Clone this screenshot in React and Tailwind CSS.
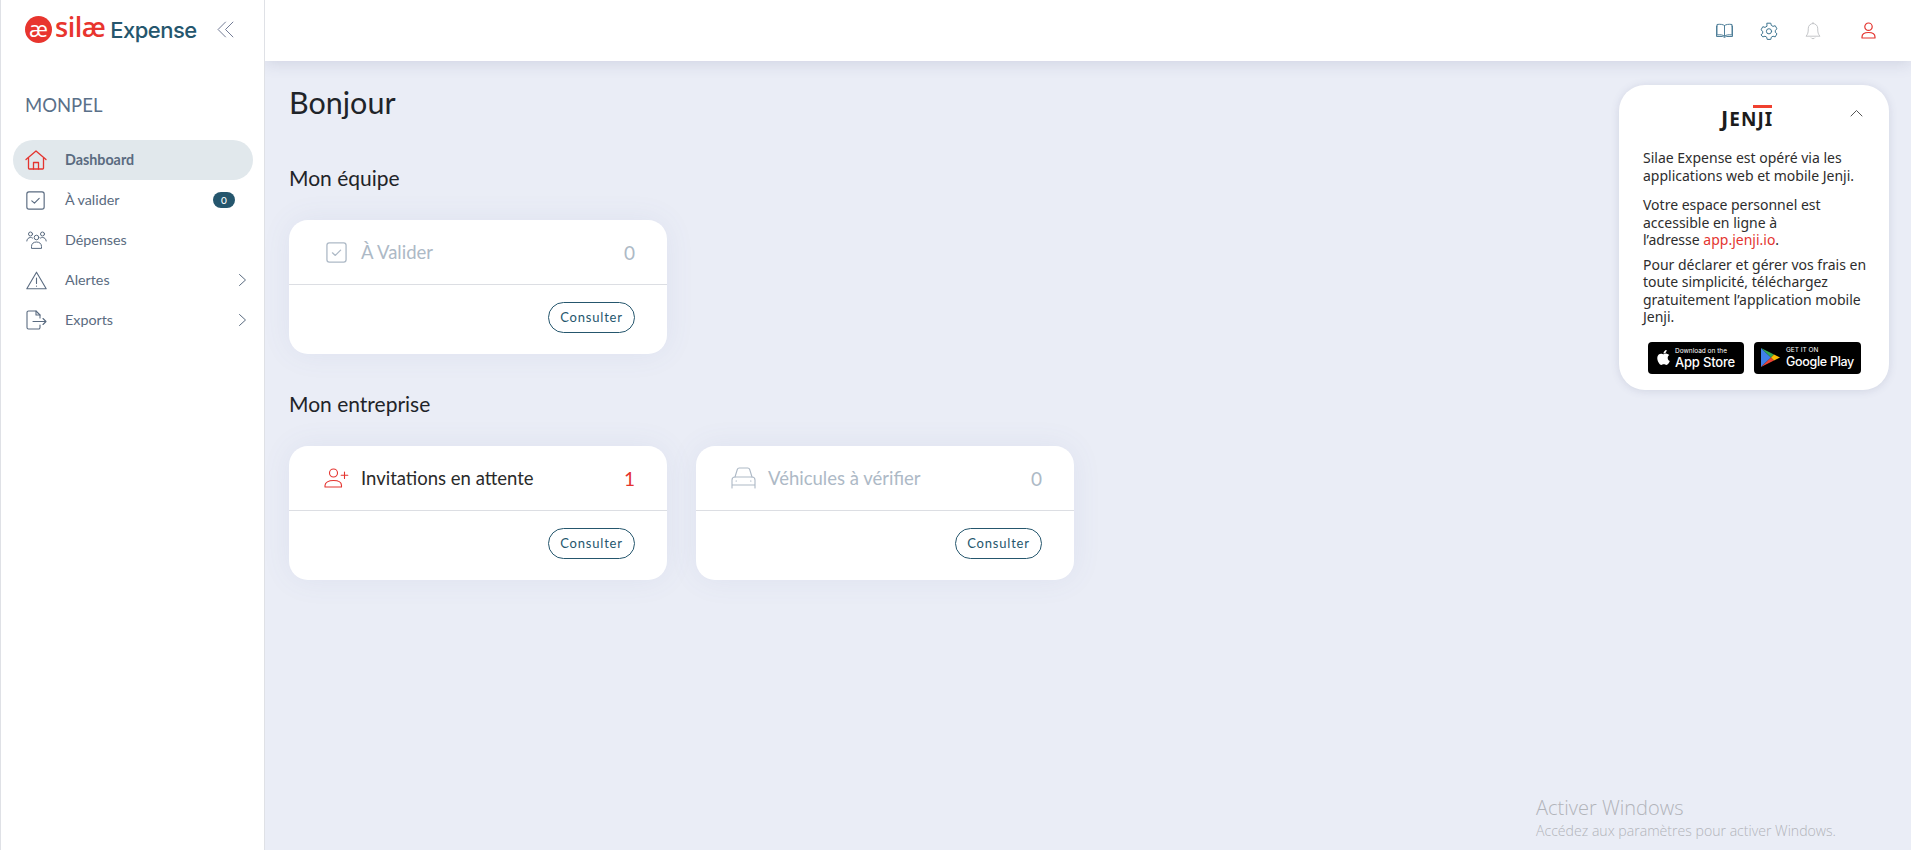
import React from "react";
import { FaApple } from "react-icons/fa";

const Ic = ({ children, className = "", w = 24, h = 24, vb = "0 0 24 24", sw = 1.3 }) => (
  <svg width={w} height={h} viewBox={vb} fill="none" stroke="currentColor" strokeWidth={sw} strokeLinecap="round" strokeLinejoin="round" className={className}>
    {children}
  </svg>
);

const Home = () => (
  <Ic className="text-[#e4342f]" w={22} h={22} vb="0 0 22 22">
    <path d="M1 10.500 11 2l10 8.500" />
    <path d="M3.500 9v10.200a.8.8 0 0 0 .8.8h13.400a.8.8 0 0 0 .8-.8V9" />
    <path d="M8.500 20v-6.500h5V20" />
  </Ic>
);
const Check = ({ cls, s = 18 }) => (
  <Ic className={cls} w={s} h={s} vb="0 0 18 18" sw={1.1}>
    <rect x="0.8" y="0.8" width="16.400" height="16.400" rx="2" />
    <path d="m5.500 9.300 2.500 2.200 4.500-4.500" />
  </Ic>
);
const Team = () => (
  <Ic className="text-[#5a6b80]" w={21} h={18} vb="0 0 21 18" sw={1}>
    <circle cx="10.500" cy="6.500" r="2.300" /><circle cx="4.500" cy="3" r="2" /><circle cx="16.500" cy="3" r="2" />
    <path d="M5.500 17v-1.500c0-3 2.200-4.500 5-4.500s5 1.500 5 4.500V17z" />
    <path d="M.8 10c0-1.800 1.600-3.500 3.700-3.500 1 0 1.700.2 2.300.8M20.200 10c0-1.800-1.600-3.500-3.700-3.500-1 0-1.700.2-2.300.8" />
  </Ic>
);
const Alert = () => (
  <Ic className="text-[#5a6b80]" w={21} h={19} vb="0 0 21 19" sw={1.1}>
    <path d="M10.500 1.200 20.200 17.800H.8z" />
    <path d="M10.500 7v5.500M10.500 15v.2" />
  </Ic>
);
const Export = () => (
  <Ic className="text-[#5a6b80]" w={21} h={20} vb="0 0 21 20" sw={1.1}>
    <path d="M14 8V5l-4-4H2.500A1.500 1.500 0 0 0 1 2.500v15A1.500 1.500 0 0 0 2.500 19H12.500a1.500 1.500 0 0 0 1.500-1.500V15" />
    <path d="M10 1v4h4M7 11.500h13M17 8.500l3 3-3 3" />
  </Ic>
);
const Chevron = () => (
  <Ic className="text-[#5a6b80]" w={9} h={14} vb="0 0 9 14" sw={1}>
    <path d="m1.500 1.500 6 5.500-6 5.500" />
  </Ic>
);

const NavItem = ({ icon, label, active, badge, chevron }) => (
  <div className={`h-10 ml-[12px] w-[240px] rounded-[20px] flex items-center pl-[12px] pr-[6px] ${active ? "bg-[#e1e8ec]" : ""}`}>
    <span className="w-[22px] flex justify-center shrink-0">{icon}</span>
    <span className={`ml-[18px] flex-1 text-[14.300px] text-[#5a6b80] ${active ? "font-bold" : ""}`}>{label}</span>
    {badge !== undefined && (
      <span className="mr-[12px] w-[22px] h-[16px] rounded-full bg-[#25566d] text-white text-[10px] font-medium flex items-center justify-center">{badge}</span>
    )}
    {chevron && <Chevron />}
  </div>
);

const Card = ({ icon, label, value, tone }) => (
  <div className="w-[378px] h-[134px] bg-white rounded-[19px] shadow-[0_0_30px_rgba(90,100,160,0.08)] flex flex-col">
    <div className="h-[65px] border-b border-[#dcdee3] flex items-center pl-[35px] pr-[32px]">
      <span className="w-[25px] flex justify-center shrink-0">{icon}</span>
      <span className={`ml-[12px] flex-1 text-[18.500px] leading-none ${tone === "on" ? "text-[#2a2a2a]" : "text-[#adb9c6]"}`}>{label}</span>
      <span className={`text-[19px] leading-none ${tone === "on" ? "text-[#e4342f]" : "text-[#adb9c6]"}`}>{value}</span>
    </div>
    <div className="flex-1 flex items-center justify-end pr-[32px] pb-[4px]">
      <button className="w-[87px] h-[31px] rounded-full border border-[#25566d] text-[#25566d] text-[13px] tracking-[0.8px] flex items-center justify-center">Consulter</button>
    </div>
  </div>
);

export default function App() {
  return (
    <div className="w-full h-[850px] flex overflow-hidden bg-[#eaedf6] font-['Lato',sans-serif] relative">
      <aside className="w-[265px] shrink-0 h-full bg-white border-l border-r border-[#dfe1e6] flex flex-col relative z-20">
        <div className="h-[61px] flex items-center pl-[24px] pb-[2px]">
          <span className="w-[27px] h-[27px] rounded-full bg-[#e8352e] text-white flex items-center justify-center text-[22px] leading-none font-['Open_Sans',sans-serif] pb-[3px]">æ</span>
          <span className="ml-[3px] text-[#e8352e] text-[27px] leading-none font-semibold font-['Open_Sans',sans-serif] tracking-[-0.5px] pb-[6px]">silæ</span>
          <span className="ml-[5px] text-[#25566d] text-[22px] leading-none font-medium font-['Inter',sans-serif] tracking-[-0.5px]">Expense</span>
          <Ic className="text-[#6b7590] ml-[20px]" w={17} h={17} vb="0 0 16 16" sw={0.9}>
            <path d="M8 1 1 8l7 7M15 1 8 8l7 7" />
          </Ic>
        </div>
        <div className="mt-[32px] pl-[24px] text-[18.500px] leading-[24px] text-[#5a7089]">MONPEL</div>
        <nav className="mt-[23px] flex flex-col">
          <NavItem icon={<Home />} label="Dashboard" active />
          <NavItem icon={<Check cls="text-[#5a6b80] -ml-[2px]" s={19} />} label="À valider" badge={0} />
          <NavItem icon={<Team />} label="Dépenses" />
          <NavItem icon={<Alert />} label="Alertes" chevron />
          <NavItem icon={<Export />} label="Exports" chevron />
        </nav>
      </aside>

      <div className="flex-1 flex flex-col min-w-0">
        <header className="h-[61px] shrink-0 bg-white shadow-[0_3px_14px_rgba(80,90,130,0.16)] flex items-center justify-end relative z-10 pr-[35px]">
          <div className="flex items-center">
            <Ic className="text-[#4f7f99]" w={17} h={15} vb="0 0 17 15" sw={1}>
              <path d="M8.500 2.500C7 1.300 4 1 1 1.500v10.500c3-.5 6-.2 7.500 1.200C10 11.800 13 11.500 16 12V1.500C13 1 10 1.300 8.500 2.500zM8.500 2.500v10.700" />
              <path d="M1 3H.5v10.500h6c.8 0 1.500.8 2 1 .5-.2 1.200-1 2-1h6V3H16" />
            </Ic>
            <Ic className="text-[#3f7691] ml-[27px]" w={18} h={18} vb="0 0 18 18" sw={1}>
              <path d="M7.200 1.200h3.600l.5 2.200 1.700 1 2.200-.7 1.800 3.100-1.700 1.500v2l1.700 1.500-1.800 3.100-2.200-.7-1.700 1-.5 2.200H7.200l-.5-2.200-1.700-1-2.200.7L1 12.800l1.700-1.500v-2L1 7.800l1.800-3.100 2.200.7 1.700-1z" />
              <circle cx="9" cy="9.300" r="2.600" />
            </Ic>
            <Ic className="text-[#c4c6c9] ml-[27px]" w={16} h={18} vb="0 0 16 18" sw={1}>
              <path d="M8 1.500a4.700 4.700 0 0 0-4.700 4.700c0 4.500-.5 6-2.300 8h14c-1.800-2-2.300-3.500-2.300-8A4.700 4.700 0 0 0 8 1.500zM8 .5v1M6.200 16c.4 1 3.200 1 3.600 0" />
            </Ic>
            <Ic className="text-[#e4342f] ml-[40px]" w={15} h={17} vb="0 0 15 17" sw={1.200}>
              <circle cx="7.500" cy="4.700" r="3.700" />
              <path d="M1 16v-1c0-3 2.500-4.500 6.500-4.500s6.500 1.500 6.500 4.500v1z" />
            </Ic>
          </div>
        </header>

        <main className="flex-1 pl-[24px]">
          <h1 className="mt-[21px] mb-[1px] text-[30.500px] leading-[40px] text-[#1f2429]">Bonjour</h1>
          <h2 className="mt-[41px] text-[21px] leading-[30px] text-[#1f2429]">Mon équipe</h2>
          <div className="mt-[27px]">
            <Card icon={<Check cls="text-[#adb9c6]" s={21} />} label="À Valider" value="0" />
          </div>
          <h2 className="mt-[35px] text-[21px] leading-[30px] text-[#1f2429]">Mon entreprise</h2>
          <div className="mt-[27px] flex gap-[29px]">
            <Card
              tone="on"
              icon={
                <Ic className="text-[#e4342f]" w={25} h={20} vb="0 0 25 20" sw={1.100}>
                  <circle cx="9.500" cy="5" r="4" />
                  <path d="M1 19v-1.500c0-3 3.500-5 8.500-5s8 2 8 5V19z" />
                  <path d="M20.500 4v6.500M17.200 7.200h6.600" />
                </Ic>
              }
              label="Invitations en attente"
              value="1"
            />
            <Card
              icon={
                <Ic className="text-[#adb9c6]" w={25} h={22} vb="0 0 25 22" sw={1.100}>
                  <path d="M4 10 6.300 2.500C6.600 1.500 7.300 1 8.300 1h8.400c1 0 1.700.5 2 1.500L21 10" />
                  <path d="M1 21v-8c0-1.800 1.200-3 3-3h17c1.800 0 3 1.200 3 3v8M1 18h23" />
                  <path d="M5 14h.5M19.500 14h.5" />
                </Ic>
              }
              label="Véhicules à vérifier"
              value="0"
            />
          </div>
        </main>
      </div>

      <section className="absolute left-[1619px] top-[85px] w-[270px] h-[305px] bg-white rounded-[26px] shadow-[0_1px_8px_rgba(80,90,130,0.16)] z-20 font-['Noto_Sans',sans-serif] text-[14px] leading-[17.500px] text-[#2d2d2d] px-[24px]">
        <div className="relative h-[44px]">
          <div className="absolute left-[78px] top-[21px] leading-none font-bold text-[#1c1c1c] text-[19px] tracking-[1px]">
            <span className="absolute left-[32px] -top-[1px] w-[19px] h-[3px] bg-[#f0402f]" />
            <span className="text-[22px]">J</span>ENJI
          </div>
          <Ic className="absolute right-[2px] top-[24px] text-[#555]" w={13} h={8} vb="0 0 13 8" sw={1}>
            <path d="m1 7 5.500-5.500L12 7" />
          </Ic>
        </div>
        <div className="whitespace-nowrap">
          <p className="mt-[20px]">Silae Expense est opéré via les<br />applications web et mobile Jenji.</p>
          <p className="mt-[12px]">Votre espace personnel est<br />accessible en ligne à<br />l’adresse <span className="text-[#e4342f]">app.jenji.io</span>.</p>
          <p className="mt-[7px]">Pour déclarer et gérer vos frais en<br />toute simplicité, téléchargez<br />gratuitement l’application mobile<br />Jenji.</p>
        </div>
        <div className="mt-[16px] flex gap-[10px] pl-[5px]">
          <div className="w-[96px] h-[32px] rounded-[4px] bg-black text-white flex items-center pl-[7px] font-['Inter',sans-serif]">
            <FaApple className="text-[17px] shrink-0" />
            <div className="ml-[3px] flex flex-col">
              <span className="text-[6.500px] leading-[8px] whitespace-nowrap">Download on the</span>
              <span className="text-[13px] leading-[14px] font-medium whitespace-nowrap tracking-[-0.2px]">App Store</span>
            </div>
          </div>
          <div className="w-[107px] h-[32px] rounded-[4px] bg-black text-white flex items-center pl-[7px] font-['Inter',sans-serif]">
            <svg width="19" height="21" viewBox="0 0 19 21" className="shrink-0">
              <path d="M0 1 10 10.500 0 20z" fill="#3f80e8" />
              <path d="M0 1 13 7.500 10 10.500z" fill="#34a853" />
              <path d="M0 20 13 13.500 10 10.500z" fill="#ea4335" />
              <path d="M13 7.500 19 10.500 13 13.500 10 10.500z" fill="#fbbc04" />
            </svg>
            <div className="ml-[6px] flex flex-col">
              <span className="text-[6.500px] leading-[7px] whitespace-nowrap">GET IT ON</span>
              <span className="text-[12.500px] leading-[15px] font-medium whitespace-nowrap tracking-[-0.3px]">Google Play</span>
            </div>
          </div>
        </div>
      </section>

      <div className="absolute left-[1536px] top-[794px] z-30 font-['Open_Sans',sans-serif] text-[#b2b4ba] pointer-events-none">
        <div className="text-[20px] leading-[27px] font-light">Activer Windows</div>
        <div className="text-[14.100px] leading-[19px] font-light">Accédez aux paramètres pour activer Windows.</div>
      </div>
    </div>
  );
}
